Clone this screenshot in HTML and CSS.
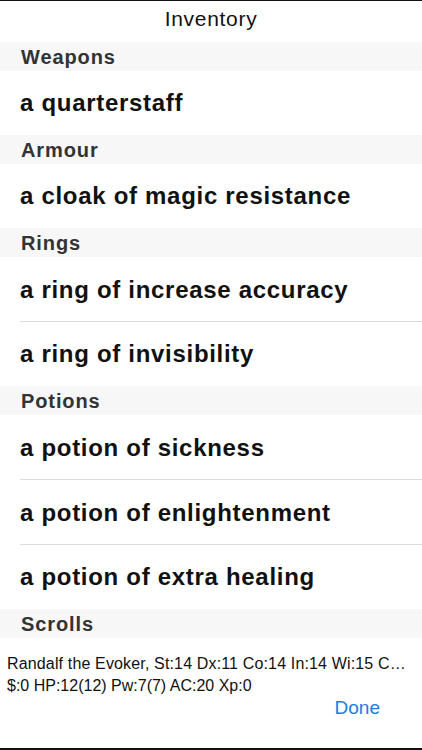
FILE: index.html
```html
<!DOCTYPE html>
<html>
<head>
<meta charset="utf-8">
<link rel="stylesheet" href="styles.css">
</head>
<body>
<div class="screen">
  <div class="title">Inventory</div>
  <div class="list">
    <div class="section">Weapons</div>
    <div class="item">a quarterstaff</div>
    <div class="section">Armour</div>
    <div class="item">a cloak of magic resistance</div>
    <div class="section">Rings</div>
    <div class="item sep">a ring of increase accuracy</div>
    <div class="item">a ring of invisibility</div>
    <div class="section">Potions</div>
    <div class="item sep">a potion of sickness</div>
    <div class="item sep">a potion of enlightenment</div>
    <div class="item">a potion of extra healing</div>
    <div class="section">Scrolls</div>
  </div>
  <div class="status">
    <div class="line first">Randalf the Evoker, St:14 Dx:11 Co:14 In:14 Wi:15 C…</div>
    <div class="line">$:0 HP:12(12) Pw:7(7) AC:20 Xp:0</div>
  </div>
  <div class="actions"><span class="done">Done</span></div>
</div>
</body>
</html>
```
FILE: styles.css
```css
html, body { margin: 0; padding: 0; background: #fff; }
body { font-family: "Liberation Sans", Arial, sans-serif; }
.screen {
  width: 422px;
  height: 750px;
  box-sizing: border-box;
  border-top: 1px solid #111;
  border-bottom: 2px solid #111;
  display: flex;
  flex-direction: column;
  overflow: hidden;
}
.title {
  height: 41px;
  display: flex;
  align-items: center;
  justify-content: center;
  font-size: 21px;
  letter-spacing: 0.7px;
  color: #111;
  padding-bottom: 6px;
  box-sizing: border-box;
}
.list { display: flex; flex-direction: column; }
.section {
  height: 29px;
  background: #f7f7f7;
  padding-left: 21px;
  padding-top: 1px;
  box-sizing: border-box;
  font-size: 20px;
  letter-spacing: 0.9px;
  font-weight: 700;
  color: #333;
  display: flex;
  align-items: center;
}
.item {
  height: 64px;
  padding-left: 20px;
  font-size: 24px;
  letter-spacing: 0.7px;
  font-weight: 700;
  color: #111;
  display: flex;
  align-items: center;
  box-sizing: border-box;
  position: relative;
}
.item.sep { height: 65px; }
.item.sep::after {
  content: "";
  position: absolute;
  left: 20px;
  right: 0;
  bottom: 0;
  height: 1px;
  background: #dcdcdc;
}
.status {
  padding: 15px 7px 0 7px;
  font-size: 16px;
  color: #111;
  line-height: 22px;
}
.line { white-space: nowrap; }
.line.first { letter-spacing: 0.15px; }
.actions {
  display: flex;
  justify-content: flex-end;
  padding-right: 42px;
}
.done { color: #1a7ee0; font-size: 19px; line-height: 22px; }
```
